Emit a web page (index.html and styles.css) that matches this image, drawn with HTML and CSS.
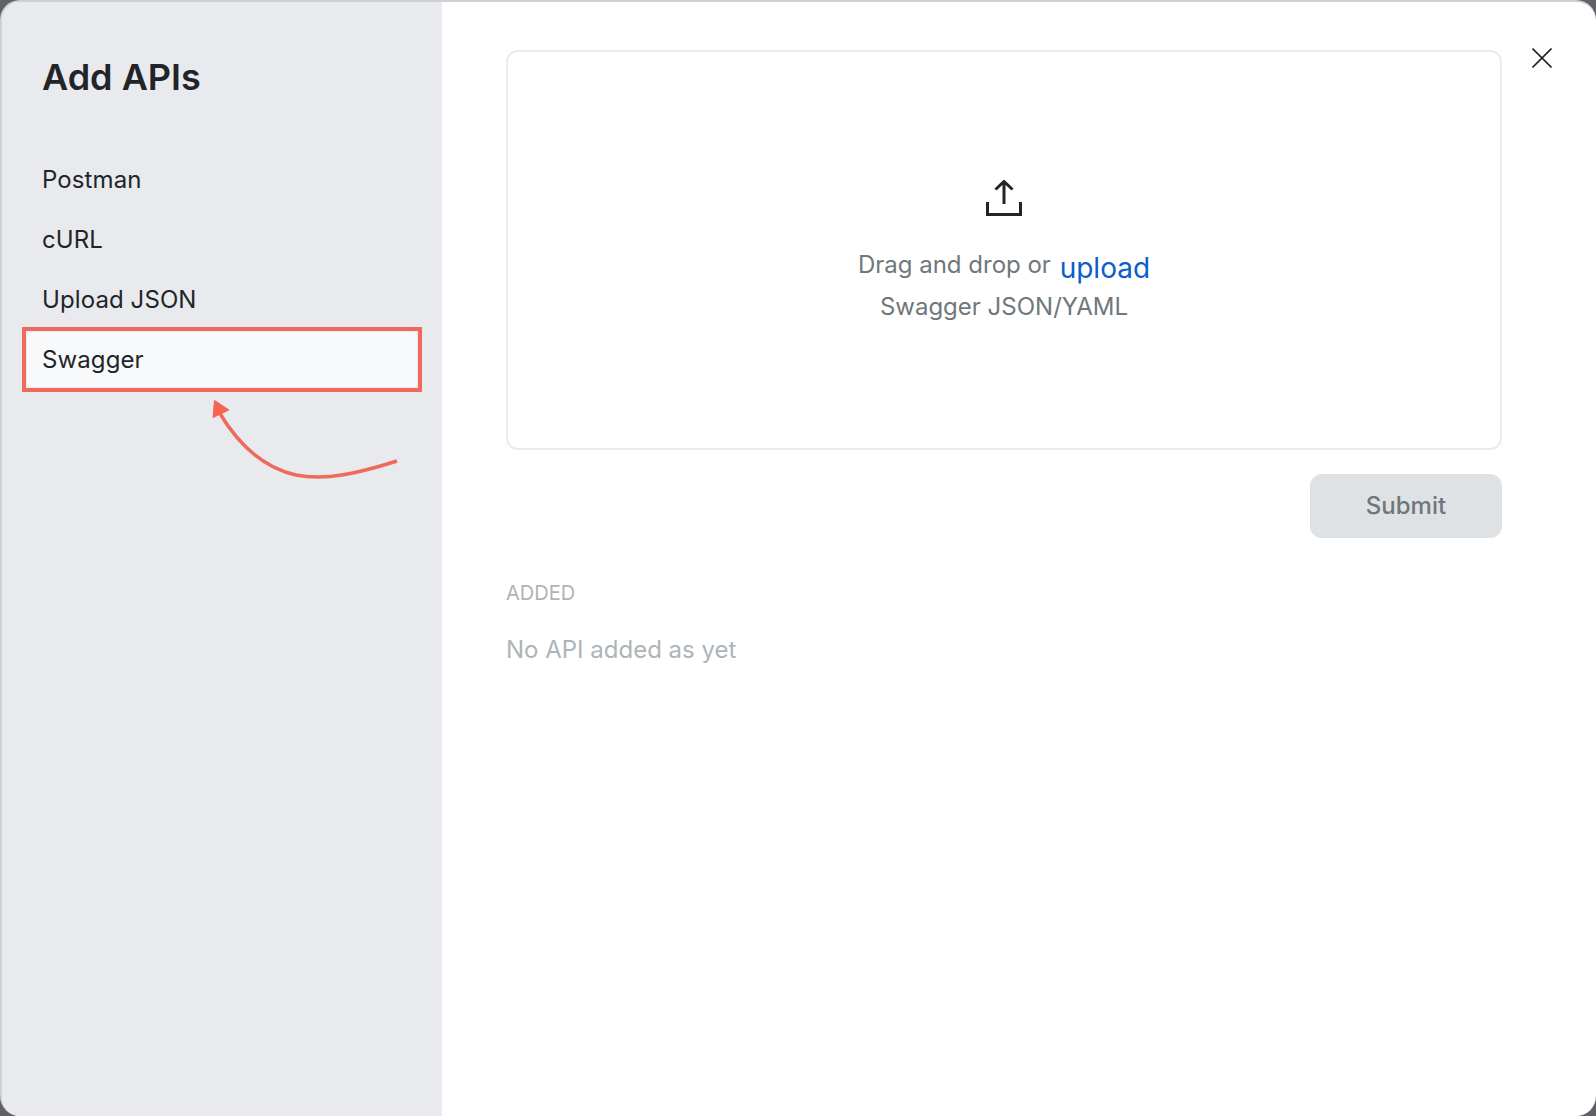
FILE: index.html
```html
<!DOCTYPE html>
<html lang="en">
<head>
    <meta charset="UTF-8">
    <meta name="viewport" content="width=device-width, initial-scale=1.0">
    <title>Add APIs</title>
    <link rel="stylesheet" href="styles.css">
</head>
<body>
    <div class="modal">
        <!-- Sidebar -->
        <aside class="sidebar">
            <h1>Add APIs</h1>
            <ul class="nav-list">
                <li class="nav-item">Postman</li>
                <li class="nav-item">cURL</li>
                <li class="nav-item">Upload JSON</li>
                <li class="nav-highlight">
                    <div class="nav-item nav-item-active">Swagger</div>
                </li>
            </ul>
            <svg class="arrow" width="200" height="90" viewBox="0 0 200 90">
                <path d="M193 61 C155 73 122 81 92 75 C60 68 34 44 15 12" fill="none" stroke="#ee6a5c" stroke-width="3.5"/>
                <path d="M10.5 0.5 L25 10 L9 17.5 Z" fill="#f5644f" stroke="#f5644f" stroke-linejoin="round"/>
            </svg>
        </aside>

        <!-- Main panel -->
        <main class="content">
            <button type="button" class="close-button" aria-label="Close">
                <svg width="20" height="20" viewBox="0 0 20 20">
                    <path d="M0.5 0.5 L19.5 19.5 M19.5 0.5 L0.5 19.5" fill="none" stroke="#212529" stroke-width="1.6"/>
                </svg>
            </button>

            <div class="dropzone">
                <svg class="upload-icon" width="36" height="36" viewBox="0 0 36 36">
                    <path d="M18 24 V2 M9.5 9.5 L18 1.5 L26.5 9.5 M1.5 22 V34.5 H34.5 V22" fill="none" stroke="#212529" stroke-width="3"/>
                </svg>
                <p class="drop-line">Drag and drop or <a class="upload-link">upload</a></p>
                <p class="drop-hint">Swagger JSON/YAML</p>
            </div>

            <div class="actions">
                <button type="button" class="submit-button">Submit</button>
            </div>

            <h2 class="added-title">ADDED</h2>
            <p class="added-empty">No API added as yet</p>
        </main>
    </div>
</body>
</html>
```

FILE: styles.css
```css
html, body {
    height: 100%;
}
body {
    margin: 0;
    overflow: hidden;
    background-color: #5f6164;
    font-family: 'Inter', sans-serif;
    color: #212529;
}
.modal {
    display: flex;
    box-sizing: border-box;
    height: 1116px;
    background-color: #ffffff;
    border-top: 2px solid #cdd0d5;
    border-left: 2px solid #cdd0d5;
    border-radius: 20px;
    overflow: hidden;
}

/* Sidebar */
.sidebar {
    position: relative;
    flex: 0 0 440px;
    background-color: #e8eaed;
}
.sidebar h1 {
    margin: 54px 0 0 40px;
    font-size: 36px;
    line-height: 42px;
    font-weight: 600;
}
.nav-list {
    list-style-type: none;
    margin: 52px 0 0 0;
    padding: 0;
}
.nav-item {
    height: 60px;
    line-height: 60px;
    padding-left: 40px;
    font-size: 24px;
    letter-spacing: 0.1px;
}
.nav-highlight {
    box-sizing: border-box;
    width: 400px;
    height: 65px;
    margin: -3px 0 0 20px;
    padding: 1px;
    border: 4px solid #ee6a5c;
}
.nav-item-active {
    height: 55px;
    line-height: 55px;
    padding-left: 15px;
    background-color: #f8f9fa;
    border-radius: 4px;
}
.arrow {
    position: absolute;
    left: 202px;
    top: 398px;
}

/* Main panel */
.content {
    position: relative;
    flex: 1;
    padding: 48px 94px 0 64px;
}
.close-button {
    position: absolute;
    top: 46px;
    right: 44px;
    width: 20px;
    height: 20px;
    padding: 0;
    border: none;
    background: none;
    line-height: 0;
}
.dropzone {
    box-sizing: border-box;
    height: 400px;
    padding-top: 128px;
    border: 2px solid #e9ecef;
    border-radius: 12px;
    text-align: center;
    color: #6f777b;
    font-size: 24px;
}
.upload-icon {
    display: block;
    margin: 0 auto;
}
.drop-line {
    margin: 27px 0 0 0;
    line-height: 44px;
}
.upload-link {
    margin-left: 2px;
    font-size: 28px;
    line-height: 1;
    vertical-align: -5px;
    color: #0b5ec9;
}
.drop-hint {
    margin: 0;
    line-height: 40px;
}
.actions {
    display: flex;
    justify-content: flex-end;
    margin-top: 24px;
}
.submit-button {
    width: 192px;
    height: 64px;
    padding: 0 0 2px 0;
    border: none;
    border-radius: 12px;
    background-color: #dee2e4;
    color: #6f777b;
    font-family: inherit;
    font-size: 24px;
    font-weight: 500;
}
.added-title {
    margin: 43px 0 0 0;
    font-size: 20px;
    line-height: 24px;
    font-weight: 400;
    color: #aeb4b8;
}
.added-empty {
    margin: 29px 0 0 0;
    font-size: 24px;
    line-height: 32px;
    color: #aeb4b8;
}
```
